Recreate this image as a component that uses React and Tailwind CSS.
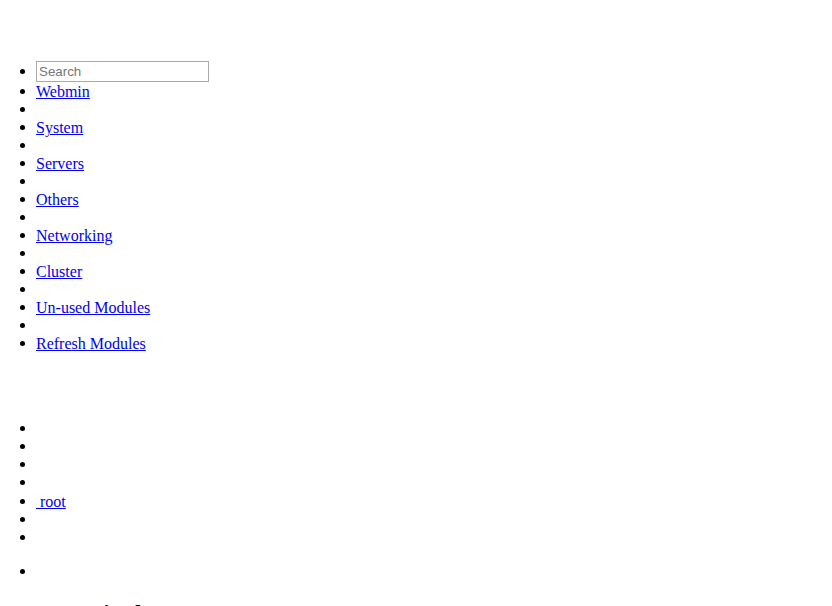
import React from 'react';

const navLinks = ['Webmin', 'System', 'Servers', 'Others', 'Networking', 'Cluster', 'Un-used Modules', 'Refresh Modules'];

const Link = ({ children }) => (
    <a href="#" className="relative top-px text-[#0000ee] underline">{children}</a>
);

// list item with a hand-drawn disc so the marker sits where the reference has it
const Item = ({ children, className = 'h-[18px]', dot = 'top-[7px]' }) => (
    <li className={`relative ${className}`}>
        <span className={`absolute left-[-16px] w-[5px] h-[5px] rounded-full bg-black ${dot}`}></span>
        {children}
    </li>
);

export default function App() {
    return (
        <div className="min-h-[606px] bg-white text-black font-['Liberation_Serif',serif] text-[16px] leading-[18px]">
            {/* Side menu */}
            <ul className="list-none pl-[36px] pt-[61px]">
                <Item className="h-[21px]" dot="top-[8px]">
                    <input
                        type="text"
                        placeholder="Search"
                        className="block w-[173px] h-[21px] border border-[#a9a9a9] px-[2px] py-[1px] font-['Liberation_Sans',sans-serif] text-[13.33px] placeholder:text-[#757575] outline-none"
                    />
                </Item>
                {navLinks.map((label, i) => (
                    <React.Fragment key={label}>
                        <Item><Link>{label}</Link></Item>
                        {i < navLinks.length - 1 && <Item />}
                    </React.Fragment>
                ))}
            </ul>

            {/* User menu */}
            <ul className="list-none pl-[36px] mt-[67px]">
                <Item />
                <Item />
                <Item />
                <Item />
                <Item className="h-[19px] pt-px" dot="top-[8px]"><Link>&nbsp;root</Link></Item>
                <Item />
                <Item />
            </ul>

            <ul className="list-none pl-[36px] mt-[16px]">
                <Item />
            </ul>

            <h2 className="mt-[19px] pl-[48px] text-[24px] leading-[28px] font-bold">Terminal</h2>
        </div>
    );
}
